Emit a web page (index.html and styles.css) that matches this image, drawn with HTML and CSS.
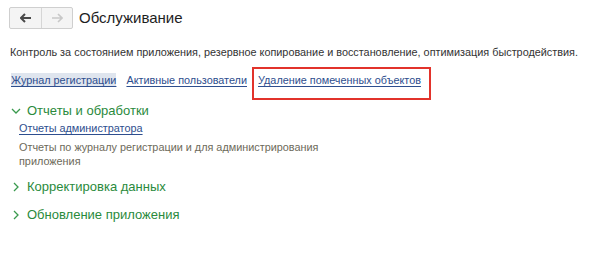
FILE: index.html
```html
<!DOCTYPE html>
<html lang="ru">

<head>
    <title>Обслуживание</title>
    <link rel="stylesheet" href="styles.css">
</head>

<body>
    <div class="header">
        <div class="nav">
            <button type="button" class="nav-btn">
                <svg width="12" height="10" viewBox="0 0 12 10"><path d="M1 5h10M5 1L1 5l4 4" fill="none" stroke="#4a4a4a" stroke-width="2"/></svg>
            </button>
            <button type="button" class="nav-btn">
                <svg width="12" height="10" viewBox="0 0 12 10"><path d="M1 5h10M7 1l4 4-4 4" fill="none" stroke="#c8c8c8" stroke-width="1.6"/></svg>
            </button>
        </div>
        <h1>Обслуживание</h1>
    </div>

    <p class="intro">Контроль за состоянием приложения, резервное копирование и восстановление, оптимизация быстродействия.</p>

    <div class="links">
        <a href="#" class="link current">Журнал регистрации</a>
        <a href="#" class="link">Активные пользователи</a>
        <span class="marked"><a href="#" class="link">Удаление помеченных объектов</a></span>
    </div>

    <div class="group first">
        <div class="group-title">
            <svg width="10" height="8" viewBox="0 0 10 8"><path d="M1 2l4 4 4-4" fill="none" stroke="#3a9a4e" stroke-width="1.3"/></svg>
            Отчеты и обработки
        </div>
        <div class="group-body">
            <a href="#" class="link">Отчеты администратора</a>
            <p class="note">Отчеты по журналу регистрации и для администрирования приложения</p>
        </div>
    </div>

    <div class="group">
        <div class="group-title">
            <svg width="10" height="10" viewBox="0 0 10 10"><path d="M3 1l4 4-4 4" fill="none" stroke="#3a9a4e" stroke-width="1.3"/></svg>
            Корректировка данных
        </div>
    </div>

    <div class="group">
        <div class="group-title">
            <svg width="10" height="10" viewBox="0 0 10 10"><path d="M3 1l4 4-4 4" fill="none" stroke="#3a9a4e" stroke-width="1.3"/></svg>
            Обновление приложения
        </div>
    </div>
</body>

</html>
```

FILE: styles.css
```css
body {
    margin: 0;
    padding: 7px 10px 0 9px;
    background-color: #ffffff;
    font-family: "Liberation Sans", Arial, sans-serif;
    font-size: 10.85px;
    line-height: 14px;
    color: #333333;
}

.header {
    display: flex;
    align-items: center;
    gap: 6px;
}

.nav {
    display: flex;
    border: 1px solid #cfcfcf;
    border-radius: 2px;
    background-color: #f4f4f4;
}

.nav-btn {
    width: 31px;
    height: 20px;
    border: none;
    background: none;
    padding: 0;
    display: flex;
    align-items: center;
    justify-content: center;
}

.nav-btn + .nav-btn {
    border-left: 1px solid #d6d6d6;
}

h1 {
    margin: 0;
    font-size: 15px;
    font-weight: normal;
    color: #1e1e1e;
}

.intro {
    margin: 16px 0 0 1px;
    color: #333333;
    white-space: nowrap;
}

.links {
    display: flex;
    align-items: flex-start;
    gap: 10px;
    margin-top: 14px;
    padding-left: 2px;
}

.link {
    color: #2e4e8e;
    text-decoration: underline;
    text-underline-offset: 2px;
}

.current {
    background-color: #dfe5ee;
}

.marked {
    border: 2px solid #e2332b;
    padding: 4px 8px 11px 4px;
    margin: -6px 0 -13px -5px;
}

.group {
    margin-top: 10px;
}

.group.first {
    margin-top: 15px;
}

.group-title {
    display: flex;
    align-items: center;
    gap: 6px;
    padding-left: 2px;
    font-size: 13px;
    line-height: 18px;
    color: #2a8a3c;
}

.group-body {
    padding-left: 10px;
    margin-top: 1px;
}

.note {
    width: 310px;
    margin: 5px 0 0 0;
    color: #6d6a5a;
}
```
